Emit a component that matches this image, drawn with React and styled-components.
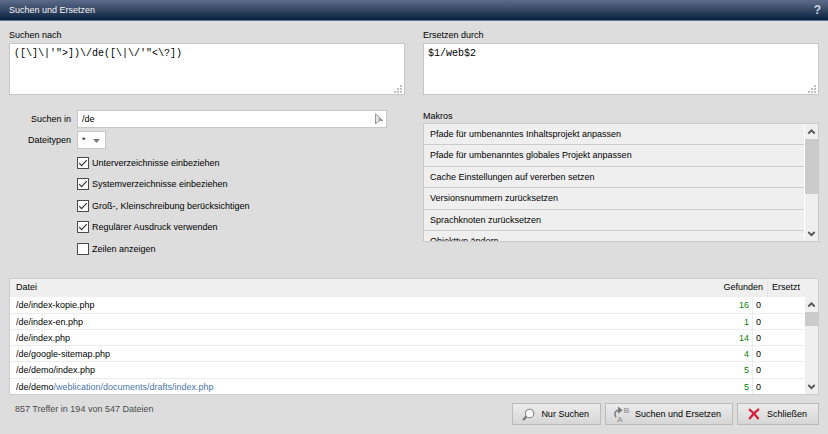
import React, { useState } from 'react';
import styled, { createGlobalStyle } from 'styled-components';

const sans = '"Liberation Sans", Arial, sans-serif';
const mono = '"Liberation Mono", "Courier New", monospace';

const GlobalStyle = createGlobalStyle`
  *, *::before, *::after { box-sizing: border-box; }
  body { margin: 0; background: #ddd; }
  body, button, input, select { font: 9px/12px ${sans}; color: #000; }
`;

const Dialog = styled.main`
  min-height: 100vh;
  background: #ddd;
`;

const TitleBar = styled.header`
  display: flex;
  align-items: center;
  justify-content: space-between;
  height: 21px;
  padding: 0 7px 0 9px;
  background: linear-gradient(#5c6b8a, #364763 50%, #06203f);
  border-bottom: 1px solid #65789a;
`;

const Title = styled.h1`
  margin: 0;
  font: 9px/12px ${sans};
  color: #f4f5f8;
`;

const HelpButton = styled.button`
  padding: 0;
  border: 0;
  background: none;
  font-size: 12px;
  font-weight: bold;
  color: #cfd5e0;
`;

const Form = styled.form`
  padding: 8px 9px;
`;

const Columns = styled.div`
  display: grid;
  grid-template-columns: 1fr 1fr;
  column-gap: 18px;
  margin-bottom: ${(p) => p.$after}px;
`;

const Field = styled.div`
  display: flex;
  flex-direction: column;
`;

const Caption = styled.label`
  height: 14px;
  line-height: 13px;
`;

const Heading = styled.h2`
  margin: 0;
  height: 13px;
  font: 9px/12px ${sans};
`;

const AreaBox = styled.div`
  position: relative;
  display: flex;
`;

const Area = styled.textarea`
  width: 100%;
  height: 52px;
  padding: 4px;
  border: 1px solid #c6c6c6;
  outline: 0;
  resize: none;
  background: #fff;
  font: 10px/12px ${mono};
  color: #000;
`;

const Grip = styled.svg`
  position: absolute;
  right: 3px;
  bottom: 2px;
`;

const Options = styled.div`
  display: grid;
  grid-template-columns: 62px minmax(0, 310px);
  gap: 3px 6px;
  align-content: start;
  align-items: center;
`;

const OptionLabel = styled.label`
  text-align: right;
`;

const InputBox = styled.div`
  position: relative;
  display: flex;
`;

const TextInput = styled.input`
  width: 100%;
  height: 18px;
  padding: 0 20px 0 4px;
  border: 1px solid #c6c6c6;
  outline: 0;
  background: #fff;
`;

const PickButton = styled.button`
  position: absolute;
  right: 3px;
  top: 3px;
  display: flex;
  padding: 0;
  border: 0;
  background: none;
`;

const SelectBox = styled.div`
  position: relative;
  display: flex;
  width: 29px;

  svg {
    position: absolute;
    right: 6px;
    top: 8px;
    pointer-events: none;
  }
`;

const Select = styled.select`
  width: 100%;
  height: 18px;
  padding: 0 4px;
  appearance: none;
  border: 1px solid #c6c6c6;
  border-radius: 0;
  outline: 0;
  background: #fff;
`;

const CheckList = styled.div`
  grid-column: 2;
`;

const CheckRow = styled.label`
  display: flex;
  align-items: center;
  gap: 3px;
  height: 21px;

  &:nth-child(even) { height: 22px; }
`;

const CheckBoxFrame = styled.span`
  position: relative;
  display: flex;

  svg {
    position: absolute;
    inset: 0;
    pointer-events: none;
  }
`;

const CheckInput = styled.input`
  width: 12px;
  height: 12px;
  margin: 0;
  appearance: none;
  border: 1px solid #4a4a4a;
  background: #fff;
`;

const MacroBox = styled.div`
  display: grid;
  grid-template-columns: 1fr 14px;
  height: 119px;
  border: 1px solid #c9c9c9;
  background: #efefef;
`;

const MacroList = styled.ul`
  margin: 0;
  padding: 0;
  height: 117px;
  overflow: hidden;
  list-style: none;
`;

const MacroItem = styled.li`
  height: 21px;
  border-bottom: 1px solid #ccc;

  &:nth-child(even) { height: 22px; }
`;

const MacroButton = styled.button`
  width: 100%;
  height: 20px;
  padding: 0 6px;
  border: 0;
  background: none;
  text-align: left;
`;

const ScrollTrack = styled.div`
  display: flex;
  flex-direction: column;
  align-items: center;
  background: #efefef;
  border-left: 1px solid #fff;
  ${(p) => p.$results && 'grid-column: 2; grid-row: 2;'}

  svg { flex: none; }
  svg:last-child { margin-top: auto; }
`;

const Thumb = styled.div`
  width: 100%;
  height: ${(p) => p.$size}px;
  background: #cbcbcb;
`;

const ResultBox = styled.div`
  display: grid;
  grid-template-columns: 1fr 14px;
  grid-template-rows: 18px 97px;
  height: 117px;
  overflow: hidden;
  border: 1px solid #ccc;
  background: #fff;
`;

const ResultTable = styled.table`
  grid-column: 1 / -1;
  grid-row: 1 / -1;
  display: block;
  min-width: 0;

  thead, tbody { display: block; }
`;

const HeadRow = styled.tr`
  display: grid;
  grid-template-columns: 1fr 100px 51px;
  height: 18px;
  background: #efefef;
`;

const HeadCell = styled.th`
  padding: 2px ${(p) => (p.$wide ? 6 : 4)}px;
  font-weight: normal;
  text-align: ${(p) => p.$align || 'left'};
  ${(p) => p.$rule && 'border-left: 1px solid #e6e6e6;'}
`;

const BodyRow = styled.tr`
  display: grid;
  grid-template-columns: 1fr 50px 52px;
  height: 16px;
  margin-right: 14px;
  border-bottom: 1px solid #ececec;

  &:nth-child(4n + 1) { height: 17px; }
`;

const Cell = styled.td`
  padding: 2px ${(p) => (p.$wide ? 6 : 3)}px;
  text-align: ${(p) => p.$align || 'left'};
  color: ${(p) => (p.$found ? '#0a820a' : '#000')};
  ${(p) => p.$rule && 'border-left: 1px solid #ececec;'}
`;

const PathTail = styled.span`
  color: #4a76ad;
`;

const Footer = styled.footer`
  display: flex;
  align-items: flex-start;
  justify-content: space-between;
  padding: 8px 0 0 6px;
`;

const Status = styled.p`
  margin: 0;
  color: #4c4c4c;
`;

const Actions = styled.div`
  display: flex;
  gap: 4px;
`;

const ActionButton = styled.button`
  display: flex;
  align-items: center;
  gap: ${(p) => p.$gap}px;
  height: 22px;
  padding: 0 ${(p) => p.$end}px 0 ${(p) => p.$start}px;
  border: 1px solid #bcbcbc;
  background: linear-gradient(#ececec, #d6d6d6);
  white-space: nowrap;

  svg { flex: none; }
`;

const GripDots = () => (
  <Grip width="8" height="8" viewBox="0 0 8 8" fill="#c0c0c0" aria-hidden="true">
    <path d="M6 0h2v2H6zM3 3h2v2H3zM6 3h2v2H6zM0 6h2v2H0zM3 6h2v2H3zM6 6h2v2H6z" />
  </Grip>
);

const Chevron = ({ down }) => (
  <svg width="13" height="15" viewBox="0 0 13 15" fill="none" stroke="#555" strokeWidth="1.8" aria-hidden="true">
    <path d={down ? 'M3.3 6 L6.5 9.2 L9.7 6' : 'M3.3 9.5 L6.5 6.3 L9.7 9.5'} />
  </svg>
);

const PointerIcon = () => (
  <svg width="10" height="12" viewBox="0 0 10 12" aria-hidden="true">
    <path d="M1.5 0.8 L8.8 7.4 L5 7.8 L1.5 11 Z" fill="#e4e4e4" stroke="#989898" />
    <path d="M4.4 5 L8.4 7.3 L5 7.6Z" fill="#8c8c8c" />
  </svg>
);

const LensIcon = () => (
  <svg width="13" height="13" viewBox="0 0 13 13" aria-hidden="true">
    <path d="M1 12 L4.4 8.6" stroke="#777" strokeWidth="2.2" />
    <circle cx="7.6" cy="5.4" r="4.2" fill="#fafafa" stroke="#8a8a8a" strokeWidth="1.1" />
  </svg>
);

const ReplaceIcon = () => (
  <svg width="18" height="18" viewBox="0 0 18 18" aria-hidden="true">
    <path d="M3 12.4 C0.6 8.6 2.4 5.2 6 5.2" fill="none" stroke="#858585" strokeWidth="1.7" />
    <path d="M5 1.6 L9.6 5.2 L5 8.8Z" fill="#777" />
    <text x="10.5" y="7.5" fontFamily="Liberation Sans, sans-serif" fontSize="8" fontWeight="bold" fill="#a0a0a0">B</text>
    <text x="4" y="17" fontFamily="Liberation Sans, sans-serif" fontSize="8" fontWeight="bold" fill="#a0a0a0">A</text>
  </svg>
);

const CrossIcon = () => (
  <svg width="12" height="12" viewBox="0 0 12 12" fill="none" stroke="#d2223f" strokeWidth="2.2" aria-hidden="true">
    <path d="M1 1.2 Q6 5 10.6 11 M11 1 Q5.5 5 1.2 11.2" />
  </svg>
);

const Scrollbar = ({ size, results }) => (
  <ScrollTrack $results={results}>
    <Chevron />
    <Thumb $size={size} />
    <Chevron down />
  </ScrollTrack>
);

const macros = [
  'Pfade für umbenanntes Inhaltsprojekt anpassen',
  'Pfade für umbenanntes globales Projekt anpassen',
  'Cache Einstellungen auf vererben setzen',
  'Versionsnummern zurücksetzen',
  'Sprachknoten zurücksetzen',
  'Objekttyp ändern',
];

const options = [
  ['Unterverzeichnisse einbeziehen', true],
  ['Systemverzeichnisse einbeziehen', true],
  ['Groß-, Kleinschreibung berücksichtigen', true],
  ['Regulärer Ausdruck verwenden', true],
  ['Zeilen anzeigen', false],
];

const files = [
  { path: '/de/index-kopie.php', found: 16 },
  { path: '/de/index-en.php', found: 1 },
  { path: '/de/index.php', found: 14 },
  { path: '/de/google-sitemap.php', found: 4 },
  { path: '/de/demo/index.php', found: 5 },
  { path: '/de/demo', tail: '/weblication/documents/drafts/index.php', found: 5 },
];

const CheckOption = ({ label, initial }) => {
  const [checked, setChecked] = useState(initial);
  return (
    <CheckRow>
      <CheckBoxFrame>
        <CheckInput type="checkbox" checked={checked} onChange={(e) => setChecked(e.target.checked)} />
        {checked && (
          <svg width="12" height="12" viewBox="0 0 12 12" fill="none" stroke="#333" strokeWidth="1.2" aria-hidden="true">
            <path d="M2.2 6.2 L4.6 8.7 L9.8 3.2" />
          </svg>
        )}
      </CheckBoxFrame>
      {label}
    </CheckRow>
  );
};

export default function App() {
  return (
    <Dialog>
      <GlobalStyle />
      <TitleBar>
        <Title>Suchen und Ersetzen</Title>
        <HelpButton type="button">?</HelpButton>
      </TitleBar>
      <Form onSubmit={(e) => e.preventDefault()}>
        <Columns $after={15}>
          <Field>
            <Caption htmlFor="search">Suchen nach</Caption>
            <AreaBox>
              <Area id="search" spellCheck={false} defaultValue={`([\\]\\|'">])\\/de([\\|\\/'"<\\?])`} />
              <GripDots />
            </AreaBox>
          </Field>
          <Field>
            <Caption htmlFor="replace">Ersetzen durch</Caption>
            <AreaBox>
              <Area id="replace" spellCheck={false} defaultValue="$1/web$2" />
              <GripDots />
            </AreaBox>
          </Field>
        </Columns>
        <Columns $after={19}>
          <Options>
            <OptionLabel htmlFor="folder">Suchen in</OptionLabel>
            <InputBox>
              <TextInput id="folder" defaultValue="/de" />
              <PickButton type="button" aria-label="Verzeichnis wählen">
                <PointerIcon />
              </PickButton>
            </InputBox>
            <OptionLabel htmlFor="types">Dateitypen</OptionLabel>
            <SelectBox>
              <Select id="types" defaultValue="*">
                <option>*</option>
              </Select>
              <svg width="7" height="4" viewBox="0 0 7 4" fill="#777" aria-hidden="true">
                <path d="M0 0H7L3.5 4Z" />
              </svg>
            </SelectBox>
            <CheckList>
              {options.map(([label, initial]) => (
                <CheckOption key={label} label={label} initial={initial} />
              ))}
            </CheckList>
          </Options>
          <Field>
            <Heading>Makros</Heading>
            <MacroBox>
              <MacroList>
                {macros.map((name) => (
                  <MacroItem key={name}>
                    <MacroButton type="button">{name}</MacroButton>
                  </MacroItem>
                ))}
              </MacroList>
              <Scrollbar size={55} />
            </MacroBox>
          </Field>
        </Columns>
        <ResultBox>
          <ResultTable>
            <thead>
              <HeadRow>
                <HeadCell $wide>Datei</HeadCell>
                <HeadCell $align="right">Gefunden</HeadCell>
                <HeadCell $rule>Ersetzt</HeadCell>
              </HeadRow>
            </thead>
            <tbody>
              {files.map((file) => (
                <BodyRow key={file.path + (file.tail || '')}>
                  <Cell $wide>
                    {file.path}
                    {file.tail && <PathTail>{file.tail}</PathTail>}
                  </Cell>
                  <Cell $align="right" $found>{file.found}</Cell>
                  <Cell $rule>0</Cell>
                </BodyRow>
              ))}
            </tbody>
          </ResultTable>
          <Scrollbar size={14} results />
        </ResultBox>
        <Footer>
          <Status>857 Treffer in 194 von 547 Dateien</Status>
          <Actions>
            <ActionButton type="button" $start={9} $gap={6} $end={11}>
              <LensIcon />
              Nur Suchen
            </ActionButton>
            <ActionButton type="submit" $start={7} $gap={4} $end={11}>
              <ReplaceIcon />
              Suchen und Ersetzen
            </ActionButton>
            <ActionButton type="button" $start={10} $gap={7} $end={11}>
              <CrossIcon />
              Schließen
            </ActionButton>
          </Actions>
        </Footer>
      </Form>
    </Dialog>
  );
}
